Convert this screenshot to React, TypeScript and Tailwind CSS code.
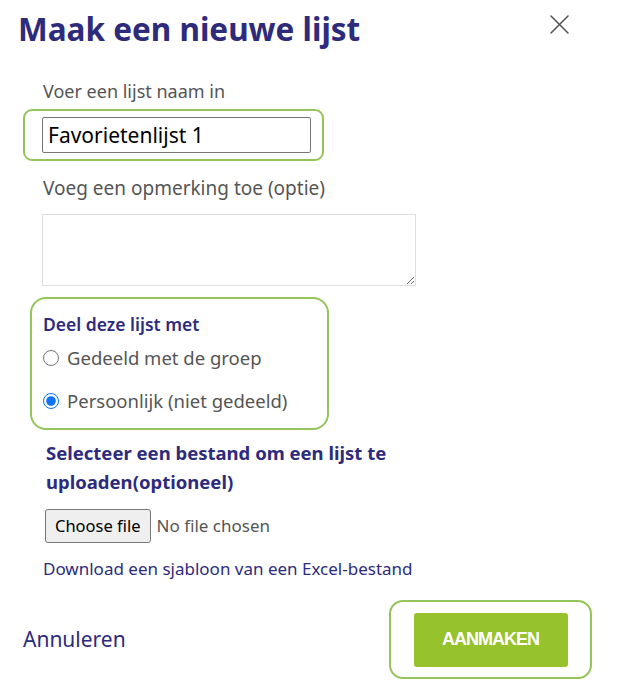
import { useState } from "react";

export default function App() {
  const [share, setShare] = useState("personal");

  return (
    <div className="w-[617px] h-[692px] bg-white font-['Noto_Sans',sans-serif] text-[#555]">
      {/* Header */}
      <div className="flex items-start justify-between pl-[18px] pr-[46px] pt-[7px]">
        <h1 className="text-[31.5px] leading-[44px] font-bold text-[#2e2b7c]">Maak een nieuwe lijst</h1>
        <button className="mt-[5px] text-[#555]" aria-label="Sluiten">
          <svg width="24" height="24" viewBox="0 0 24 24" fill="none" stroke="currentColor" strokeWidth="1.6" strokeLinecap="round">
            <path d="M4 4L21 21M21 4L4 21" />
          </svg>
        </button>
      </div>

      {/* Name */}
      <div className="pl-[43px] mt-[28px]">
        <label className="block text-[18px] leading-[24px]">Voer een lijst naam in</label>
      </div>
      <div className="ml-[23px] mt-[6px] w-[301px] rounded-[9px] border-2 border-[#94c45a] px-[17px] py-[6px]">
        <input
          defaultValue="Favorietenlijst 1"
          className="block w-[269px] h-[36px] border border-[#767676] rounded-[2px] px-[5px] text-[21px] text-black outline-none"
        />
      </div>

      {/* Remark */}
      <div className="pl-[43px] mt-[14px]">
        <label className="block text-[19px] leading-[26px]">Voeg een opmerking toe (optie)</label>
        <textarea className="block mt-[13px] -ml-px w-[374px] h-[72px] border border-[#dedede] outline-none" />
      </div>

      {/* Share */}
      <div className="ml-[30px] mt-[11px] w-[299px] rounded-[16px] border-2 border-[#94c45a] pl-[11px] pt-[12px] pb-[14px]">
        <p className="text-[17.5px] leading-[26px] font-semibold text-[#2e2b7c]">Deel deze lijst met</p>
        <label className="mt-[8px] flex items-center gap-[8px] text-[18.5px] leading-[26px]">
          <input
            type="radio"
            name="share"
            checked={share === "group"}
            onChange={() => setShare("group")}
            className="m-0 w-[16px] h-[16px] accent-[#0b75f5]"
          />
          Gedeeld met de groep
        </label>
        <label className="mt-[17px] flex items-center gap-[8px] text-[18.5px] leading-[26px]">
          <input
            type="radio"
            name="share"
            checked={share === "personal"}
            onChange={() => setShare("personal")}
            className="m-0 w-[16px] h-[16px] accent-[#0b75f5]"
          />
          Persoonlijk (niet gedeeld)
        </label>
      </div>

      {/* Upload */}
      <div className="pl-[46px] mt-[8px] pr-[200px]">
        <p className="text-[18.5px] leading-[29px] font-bold text-[#2e2b7c]">
          Selecteer een bestand om een lijst te uploaden(optioneel)
        </p>
      </div>
      <div className="pl-[45px] mt-[13px] flex items-center gap-[6px]">
        <button className="h-[34px] px-[9px] border border-[#767676] rounded-[3px] bg-[#efefef] text-[16.5px] text-black">
          Choose file
        </button>
        <span className="text-[17px] text-[#555]">No file chosen</span>
      </div>
      <div className="pl-[43px] mt-[14px]">
        <a href="#" className="text-[17px] leading-[24px] text-[#2e2b7c]">
          Download een sjabloon van een Excel-bestand
        </a>
      </div>

      {/* Footer */}
      <div className="mt-[19px] flex items-center justify-between pl-[23px] pr-[25px]">
        <button className="text-[21px] text-[#2e2b7c]">Annuleren</button>
        <div className="w-[203px] h-[79px] rounded-[14px] border-2 border-[#94c45a] flex items-center justify-center">
          <button className="w-[154px] h-[54px] rounded-[3px] bg-[#96c22b] text-white font-['Liberation_Sans',sans-serif] font-bold text-[18px] tracking-[-1px]">
            AANMAKEN
          </button>
        </div>
      </div>
    </div>
  );
}
